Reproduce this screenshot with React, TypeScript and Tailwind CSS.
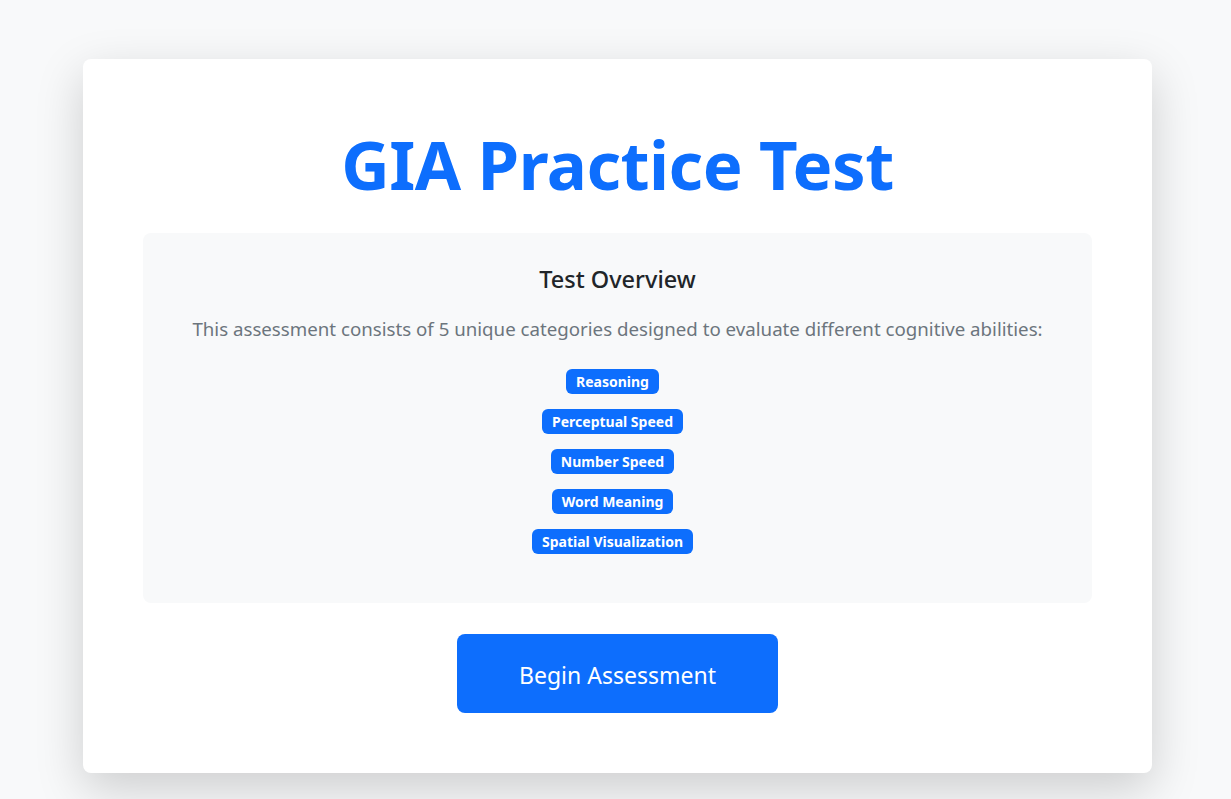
export default function App() {
  const badges = ["Reasoning", "Perceptual Speed", "Number Speed", "Word Meaning", "Spatial Visualization"];
  return (
    <div className="min-h-[799px] bg-[#f8f9fa] pt-[59px] pb-[26px] pl-[83px] pr-[79px]" style={{ fontFamily: '"Noto Sans", "Open Sans", sans-serif' }}>
      <div className="bg-white rounded-[8px] shadow-[0_16px_48px_rgba(0,0,0,0.175)] px-[60px] pt-[64px] pb-[60px] h-[714px]">
        <h1 className="text-center text-[#0d6efd] font-bold text-[67px] leading-[86px] h-[86px] tracking-[-0.5px] -translate-y-[2px]">GIA Practice Test</h1>
        <div className="mt-[24px] bg-[#f8f9fa] rounded-[8px] h-[370px] pt-[32px] flex flex-col items-center">
          <h4 className="text-[#212529] text-[23.5px] font-medium leading-[29px]">Test Overview</h4>
          <p className="mt-[21px] text-[#6c757d] text-[18.7px] leading-[27px]">This assessment consists of 5 unique categories designed to evaluate different cognitive abilities:</p>
          <div className="mt-[27px] mr-[10px] flex flex-col items-center gap-[15px]">
            {badges.map((b) => (
              <span key={b} className="bg-[#0d6efd] text-white text-[14px] font-bold rounded-[6px] h-[25px] px-[10px] flex items-center leading-none">{b}</span>
            ))}
          </div>
        </div>
        <div className="flex justify-center mt-[31px]">
          <button className="bg-[#0d6efd] text-white rounded-[8px] w-[321px] h-[79px] text-[23px] pt-[3px]">Begin Assessment</button>
        </div>
      </div>
    </div>
  );
}
